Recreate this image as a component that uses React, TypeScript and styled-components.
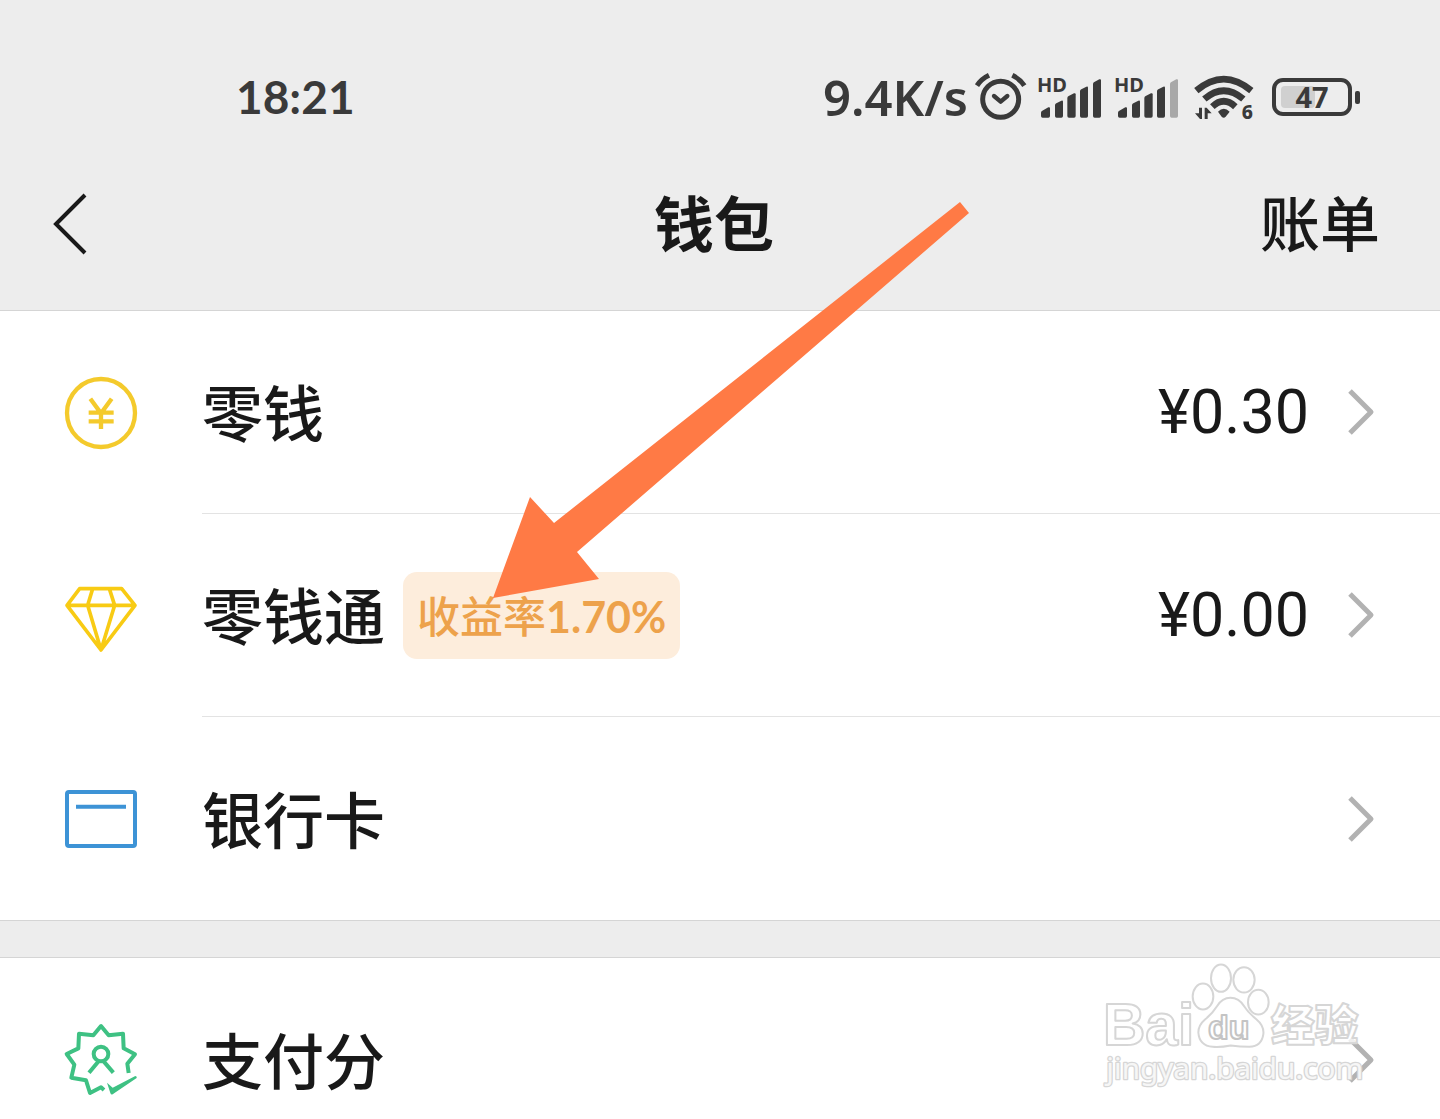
import React from "react";
import styled, { createGlobalStyle } from "styled-components";

const cjk = `"Noto Sans CJK SC", sans-serif`;

const GlobalStyle = createGlobalStyle`
  *, *::before, *::after { box-sizing: border-box; }
  body { margin: 0; background: #ededed; font-family: ${cjk}; color: #191919; }
  button { font: inherit; color: inherit; background: none; border: 0; padding: 0; cursor: pointer; }
  h1 { margin: 0; }
  svg { display: block; flex: none; overflow: visible; }
`;

const Page = styled.div`
  position: relative;
  height: 100vh;
  overflow: hidden;
  background: #ededed;
`;

const Header = styled.header`
  border-bottom: 1px solid #d5d5d5;
`;

const StatusBar = styled.div`
  display: flex;
  align-items: center;
  justify-content: space-between;
  height: 136px;
  padding: 60px 80px 2px 236px;
  color: #3a3a3a;
`;

const Clock = styled.time`
  font: 700 46px/60px Lato, sans-serif;
`;

const StatusGroup = styled.div`
  display: flex;
  align-items: center;
`;

const Speed = styled.span`
  margin-right: 7px;
  font: 600 49px/60px "Noto Sans", sans-serif;
`;

const Signals = styled.div`
  display: flex;
  gap: 12px;
  margin: 0 15px 0 10px;
`;

const Battery = styled.div`
  position: relative;
  display: flex;
  align-items: center;
  justify-content: center;
  width: 80px;
  height: 38px;
  margin: 0 8px 0 18px;
  border: 4px solid #3a3a3a;
  border-radius: 11px;
  font: 700 29px/30px "Noto Sans", sans-serif;

  &::after {
    content: "";
    position: absolute;
    right: -12px;
    width: 5px;
    height: 13px;
    border-radius: 2px;
    background: #3a3a3a;
  }
`;

const Charge = styled.div`
  position: absolute;
  left: 5px;
  top: 4px;
  bottom: 4px;
  border-radius: 4px;
  background: #d0d0d0;
`;

const BatteryText = styled.span`
  position: relative;
`;

const NavBar = styled.nav`
  display: grid;
  grid-template-columns: 1fr auto 1fr;
  align-items: center;
  height: 174px;
  padding: 0 60px 0 48px;
`;

const BackButton = styled.button`
  justify-self: start;
`;

const Title = styled.h1`
  padding-bottom: 4px;
  font-size: 60px;
  font-weight: 700;
  line-height: 88px;
`;

const BillButton = styled.button`
  && {
    justify-self: end;
    padding-bottom: 4px;
    font-size: 60px;
    font-weight: 500;
    line-height: 88px;
  }
`;

const Section = styled.section`
  background: #fff;
  border-bottom: 1px solid #d5d5d5;

  & + & {
    margin-top: 36px;
    border-top: 1px solid #d5d5d5;
  }
`;

const Row = styled.button`
  display: flex;
  align-items: stretch;
  width: 100%;
  text-align: left;
`;

const RowIcon = styled.span`
  display: flex;
  align-items: center;
  padding: 0 65px;
`;

const RowBody = styled.span<{ $divided?: boolean }>`
  display: flex;
  flex: 1;
  align-items: center;
  height: 203px;
  padding-right: 65px;
  border-bottom: ${(p) => (p.$divided ? "1px solid #e3e3e3" : "0")};
`;

const Label = styled.span`
  padding-bottom: 2px;
  font-size: 61px;
  font-weight: 500;
  line-height: 88px;
`;

const Badge = styled.span`
  margin-left: 18px;
  padding: 0 14px;
  border-radius: 14px;
  background: #fdeddc;
  color: #eda24b;
  font: 700 43px/84px Lato, ${cjk};
`;

const BadgeText = styled.span`
  font-family: ${cjk};
  font-weight: 500;
`;

const Amount = styled.span`
  margin-left: auto;
  font: 400 61px/88px Roboto, sans-serif;
`;

const Arrow = styled.span<{ $push: boolean }>`
  margin-left: ${(p) => (p.$push ? "auto" : "38px")};
`;

const Pointer = styled.svg`
  position: absolute;
  left: 493px;
  top: 202px;
  pointer-events: none;
`;

const Watermark = styled.svg`
  position: absolute;
  right: 77px;
  bottom: 29px;
  pointer-events: none;
`;

const AlarmIcon = () => (
  <svg width="52" height="48" viewBox="525 36 156 144" fill="none" stroke="#3a3a3a" strokeLinejoin="round">
    <circle cx="602" cy="115" r="54" strokeWidth="15" />
    <path d="M582 105l20 17 20-17" strokeWidth="13" strokeLinecap="round" />
    <path d="M531 74q13-20 36-31M637 43q23 11 36 31" strokeWidth="15" />
  </svg>
);

const SignalIcon = ({ weak = false }: { weak?: boolean }) => (
  <svg width="65" height="43" viewBox="42 45 195 129" fill="#3a3a3a">
    <text x="42" y="94" fontFamily="Noto Sans, sans-serif" fontWeight="700" fontSize="60">HD</text>
    <path d="M54 155q0-4 4-6l18-10q5-2 5 3v23q0 5-5 5H59q-5 0-5-5z" />
    <path d="M96 133q0-4 4-6l15-8q5-2 5 3v43q0 5-5 5h-14q-5 0-5-5z" />
    <path d="M133 111q0-4 4-6l16-8q5-2 5 3v65q0 5-5 5h-15q-5 0-5-5z" />
    <path d="M171 91q0-4 4-6l15-8q5-2 5 3v85q0 5-5 5h-14q-5 0-5-5z" />
    <path d="M210 69q0-4 4-6l15-8q5-2 5 3v107q0 5-5 5h-14q-5 0-5-5z" fill={weak ? "#a8a8a8" : "#3a3a3a"} />
  </svg>
);

const WifiIcon = () => (
  <svg width="60" height="47" viewBox="282 42 180 141" fill="none" stroke="#3a3a3a">
    <path d="M289 92q82-69 165 0" strokeWidth="20" />
    <path d="M313 117q58-50 117 0" strokeWidth="20" />
    <path d="M337 140q34-32 69 0" strokeWidth="20" />
    <path d="M354 155q17-17 35 0l-12 15q-6 6-12 0z" fill="#3a3a3a" stroke="none" />
    <path d="M297 143h9v34h-6l-15-17h12zM323 177h-9v-34h6l15 17h-12z" fill="#3a3a3a" stroke="none" />
    <text x="425" y="178" fill="#3a3a3a" stroke="none" fontFamily="Noto Sans, sans-serif" fontWeight="800" fontSize="58">6</text>
  </svg>
);

const BackIcon = () => (
  <svg width="44" height="64" viewBox="0 0 44 64" fill="none" stroke="#191919" strokeWidth="4">
    <path d="M37 4L8 33l29 29" />
  </svg>
);

const ChevronIcon = () => (
  <svg width="28" height="48" viewBox="0 0 28 48" fill="none" stroke="#b2b2b2" strokeWidth="5" strokeLinejoin="round">
    <path d="M3 3l21 21L3 45" />
  </svg>
);

const CoinIcon = () => (
  <svg width="72" height="72" viewBox="0 0 216 216" fill="none" stroke="#f4ca2c" strokeWidth="13">
    <circle cx="108" cy="108" r="102" />
    <path d="M76 65l32 44 32-44M71 107h75M71 133h75M108 107v49" />
  </svg>
);

const DiamondIcon = () => (
  <svg width="72" height="72" viewBox="0 0 216 216" fill="none" stroke="#f8cb14" strokeWidth="11" strokeLinejoin="round">
    <path d="M44 26h126l40 50-102 134L6 76zM6 76h204M83 26L68 76l40 134 41-134-16-50" />
  </svg>
);

const CardIcon = () => (
  <svg width="72" height="72" viewBox="0 0 216 216" fill="none" stroke="#3d93d6" strokeWidth="12">
    <rect x="6" y="27" width="204" height="162" rx="6" />
    <path d="M33 71h150" />
  </svg>
);

const ScoreIcon = () => (
  <svg width="72" height="72" viewBox="0 0 216 216" fill="none" stroke="#3ec183" strokeWidth="12" strokeLinejoin="round">
    <path d="M191 147l-4-28 23-28-34-18-2-44-43 5-23-28-23 28-43-5-2 44-35 17 23 32-9 39 44 8 12 38 33-17 9 8" />
    <circle cx="108" cy="90" r="22" />
    <path d="M102 110l-30 36M114 110l31 36" />
    <path d="M126 176l17 15 68-35q6 1 4 6l-72 49q-5 2-7-4z" fill="#3ec183" stroke="none" />
  </svg>
);

interface WalletRowProps {
  icon: React.ReactNode;
  label: string;
  amount?: string;
  badge?: [string, string];
  divided?: boolean;
}

const WalletRow = ({ icon, label, amount, badge, divided }: WalletRowProps) => (
  <Row type="button">
    <RowIcon>{icon}</RowIcon>
    <RowBody $divided={divided}>
      <Label>{label}</Label>
      {badge && (
        <Badge>
          <BadgeText>{badge[0]}</BadgeText>
          {badge[1]}
        </Badge>
      )}
      {amount && <Amount>{amount}</Amount>}
      <Arrow $push={!amount}>
        <ChevronIcon />
      </Arrow>
    </RowBody>
  </Row>
);

export default function App() {
  const charge = 47;
  return (
    <Page>
      <GlobalStyle />
      <Header>
        <StatusBar>
          <Clock>18:21</Clock>
          <StatusGroup>
            <Speed>9.4K/s</Speed>
            <AlarmIcon />
            <Signals>
              <SignalIcon />
              <SignalIcon weak />
            </Signals>
            <WifiIcon />
            <Battery>
              <Charge style={{ width: `${charge}%` }} />
              <BatteryText>{charge}</BatteryText>
            </Battery>
          </StatusGroup>
        </StatusBar>
        <NavBar>
          <BackButton type="button" aria-label="返回">
            <BackIcon />
          </BackButton>
          <Title>钱包</Title>
          <BillButton type="button">账单</BillButton>
        </NavBar>
      </Header>
      <main>
        <Section>
          <WalletRow icon={<CoinIcon />} label="零钱" amount="¥0.30" divided />
          <WalletRow icon={<DiamondIcon />} label="零钱通" badge={["收益率", "1.70%"]} amount="¥0.00" divided />
          <WalletRow icon={<CardIcon />} label="银行卡" />
        </Section>
        <Section>
          <WalletRow icon={<ScoreIcon />} label="支付分" />
        </Section>
      </main>
      <Pointer width="477" height="397" viewBox="493 202 477 397" fill="#ff7a45">
        <path d="M493 598L530 497 554 523 960 202 969 213 577 552 599 579z" />
      </Pointer>
      <Watermark
        width="260"
        height="127"
        viewBox="40 40 780 380"
        fill="#fff"
        fillOpacity="0.8"
        stroke="#d6d6d6"
        strokeWidth="6"
        strokeLinejoin="round"
      >
        <ellipse cx="340" cy="140" rx="31" ry="39" />
        <ellipse cx="394" cy="85" rx="30" ry="41" />
        <ellipse cx="463" cy="90" rx="32" ry="38" />
        <ellipse cx="506" cy="157" rx="31" ry="37" />
        <path d="M422 144q26 0 42 26 12 19 36 38 24 20 21 45-5 37-42 38-28 0-56-4-30 6-54 4-40-3-43-43 0-22 20-39 22-18 36-40 16-25 40-25z" />
        <text x="355" y="267" fontFamily="Liberation Sans, sans-serif" fontWeight="700" fontSize="102" stroke="#c4c4c4">du</text>
        <text x="40" y="287" fontFamily="Liberation Sans, sans-serif" fontWeight="700" fontSize="176">Bai</text>
        <text x="544" y="274" fontFamily="Noto Sans CJK SC, sans-serif" fontWeight="900" fontSize="131">经验</text>
        <text x="50" y="388" fontFamily="Noto Sans, sans-serif" fontSize="89" paintOrder="stroke" strokeWidth="8">jingyan.baidu.com</text>
      </Watermark>
    </Page>
  );
}
